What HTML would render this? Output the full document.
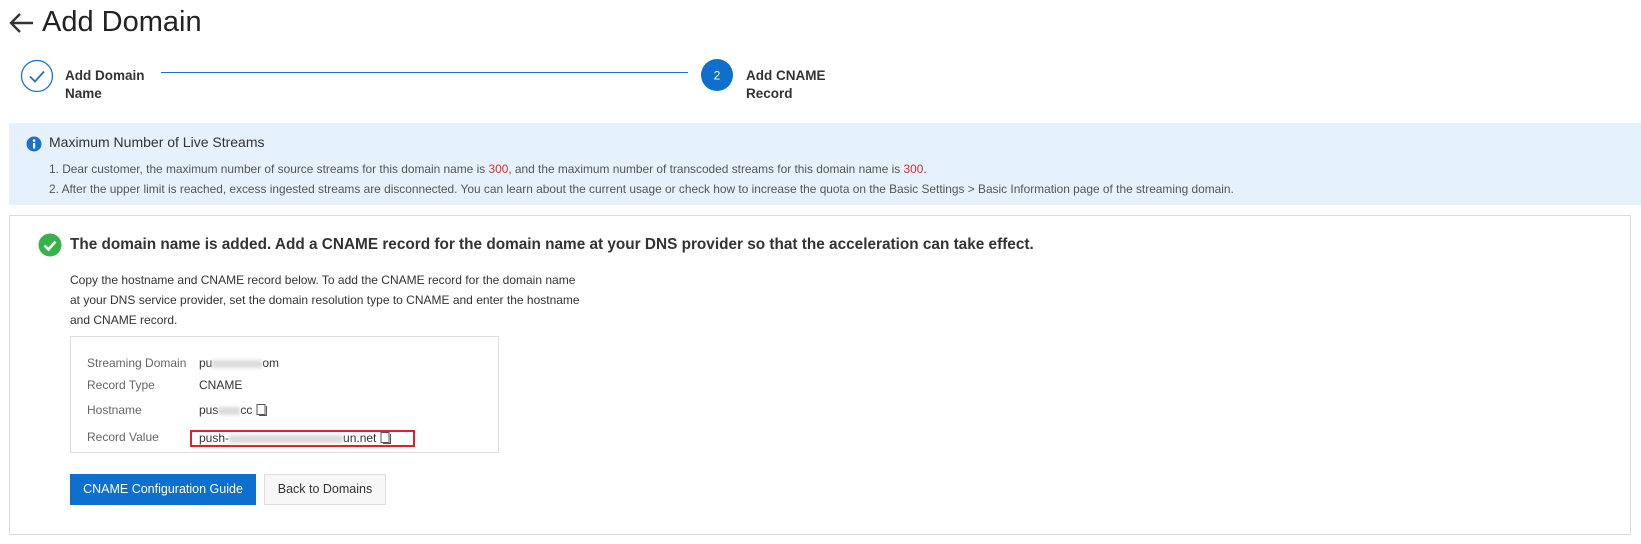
<!DOCTYPE html>
<html><head><meta charset="utf-8"><style>
*{margin:0;padding:0;box-sizing:border-box}
body{width:1641px;height:544px;background:#fff;font-family:"Liberation Sans",sans-serif;color:#333;position:relative;overflow:hidden}
.abs{position:absolute;white-space:nowrap}
.title{left:42px;top:4px;font-size:29px;color:#222;line-height:36px}
.step{font-size:13.5px;font-weight:bold;color:#333;line-height:18px}
.banner{left:9px;top:123px;width:1632px;height:82px;background:#e5f1fc}
.bt{left:49px;top:134px;font-size:14px;color:#333}
.bl{left:49px;font-size:11.9px;color:#555}
.red{color:#d93026}
.card{left:9px;top:215px;width:1622px;height:320px;border:1px solid #ddd;background:#fff}
.h{left:70px;top:236px;font-size:15.35px;font-weight:bold;color:#333}
.p{left:70px;font-size:12px;color:#333}
.box{left:70px;top:336px;width:429px;height:117px;border:1px solid #ddd}
.lab{left:87px;font-size:12px;color:#666}
.val{left:199px;font-size:12px;color:#333}
.blur{display:inline-block;width:60px;height:8px;background:#dcdcdc;vertical-align:middle;filter:blur(1.5px)}
.btn{top:474px;height:31px;font-size:12.5px;line-height:31px;text-align:center}
</style></head><body>
<svg class="abs" style="left:9px;top:12px" width="26" height="22" viewBox="0 0 26 22"><path d="M24 11H3M11 2L2 11l9 9" stroke="#333" stroke-width="2.4" fill="none"/></svg>
<div class="abs title">Add Domain</div>

<svg class="abs" style="left:20px;top:59px" width="34" height="34"><circle cx="17" cy="17" r="15.5" fill="#fff" stroke="#1a73c7" stroke-width="1.3"/><path d="M10 17.5l5 5 9-10" stroke="#1a73c7" stroke-width="1.8" fill="none"/></svg>
<div class="abs step" style="left:65px;top:67px">Add Domain<br>Name</div>
<div class="abs" style="left:161px;top:72px;width:527px;height:1px;background:#1a73c7"></div>
<svg class="abs" style="left:700px;top:58px" width="34" height="34"><circle cx="17" cy="17" r="16" fill="#0f6fcc"/><text x="17" y="21.5" text-anchor="middle" font-size="12" fill="#fff" font-family="Liberation Sans">2</text></svg>
<div class="abs step" style="left:746px;top:67px">Add CNAME<br>Record</div>

<div class="abs banner"></div>
<svg class="abs" style="left:26px;top:136px" width="16" height="16"><circle cx="8" cy="8" r="7.5" fill="#1a6fd0"/><rect x="7" y="7" width="2.2" height="5.5" fill="#fff"/><circle cx="8.1" cy="4.6" r="1.3" fill="#fff"/></svg>
<div class="abs bt">Maximum Number of Live Streams</div>
<div class="abs bl" style="top:162px">1. Dear customer, the maximum number of source streams for this domain name is <span class="red">300</span>, and the maximum number of transcoded streams for this domain name is <span class="red">300</span>.</div>
<div class="abs bl" style="top:182px">2. After the upper limit is reached, excess ingested streams are disconnected. You can learn about the current usage or check how to increase the quota on the Basic Settings &gt; Basic Information page of the streaming domain.</div>

<div class="abs card"></div>
<svg class="abs" style="left:38px;top:233px" width="24" height="24"><circle cx="12" cy="12" r="11.5" fill="#35b34a"/><path d="M6.5 12.5l4 4 7-8" stroke="#fff" stroke-width="2.6" fill="none"/></svg>
<div class="abs h">The domain name is added. Add a CNAME record for the domain name at your DNS provider so that the acceleration can take effect.</div>
<div class="abs p" style="top:273px">Copy the hostname and CNAME record below. To add the CNAME record for the domain name</div>
<div class="abs p" style="top:293px">at your DNS service provider, set the domain resolution type to CNAME and enter the hostname</div>
<div class="abs p" style="top:313px">and CNAME record.</div>

<div class="abs box"></div>
<div class="abs lab" style="top:356px">Streaming Domain</div>
<div class="abs val" style="top:356px">pu<span class="blur" style="width:50px"></span>om</div>
<div class="abs lab" style="top:378px">Record Type</div>
<div class="abs val" style="top:378px">CNAME</div>
<div class="abs lab" style="top:403px">Hostname</div>
<div class="abs val" style="top:403px">pus<span class="blur" style="width:22px"></span>cc <svg width="12" height="13" style="vertical-align:-2px"><rect x="1" y="1.5" width="8" height="10" fill="none" stroke="#555" stroke-width="1"/><path d="M3 12.5h7.5V3" stroke="#555" fill="none"/></svg></div>
<div class="abs" style="left:190px;top:430px;width:225px;height:17px;border:2px solid #e0202a"></div>
<div class="abs lab" style="top:430px">Record Value</div>
<div class="abs val" style="top:431px">push-<span class="blur" style="width:114px"></span>un.net <svg width="12" height="13" style="vertical-align:-2px"><rect x="1" y="1.5" width="8" height="10" fill="none" stroke="#555" stroke-width="1"/><path d="M3 12.5h7.5V3" stroke="#555" fill="none"/></svg></div>

<div class="abs btn" style="left:70px;width:186px;background:#0e6fcf;color:#fff">CNAME Configuration Guide</div>
<div class="abs btn" style="left:264px;width:122px;background:#f7f7f7;border:1px solid #ddd;color:#333;line-height:29px">Back to Domains</div>
</body></html>
